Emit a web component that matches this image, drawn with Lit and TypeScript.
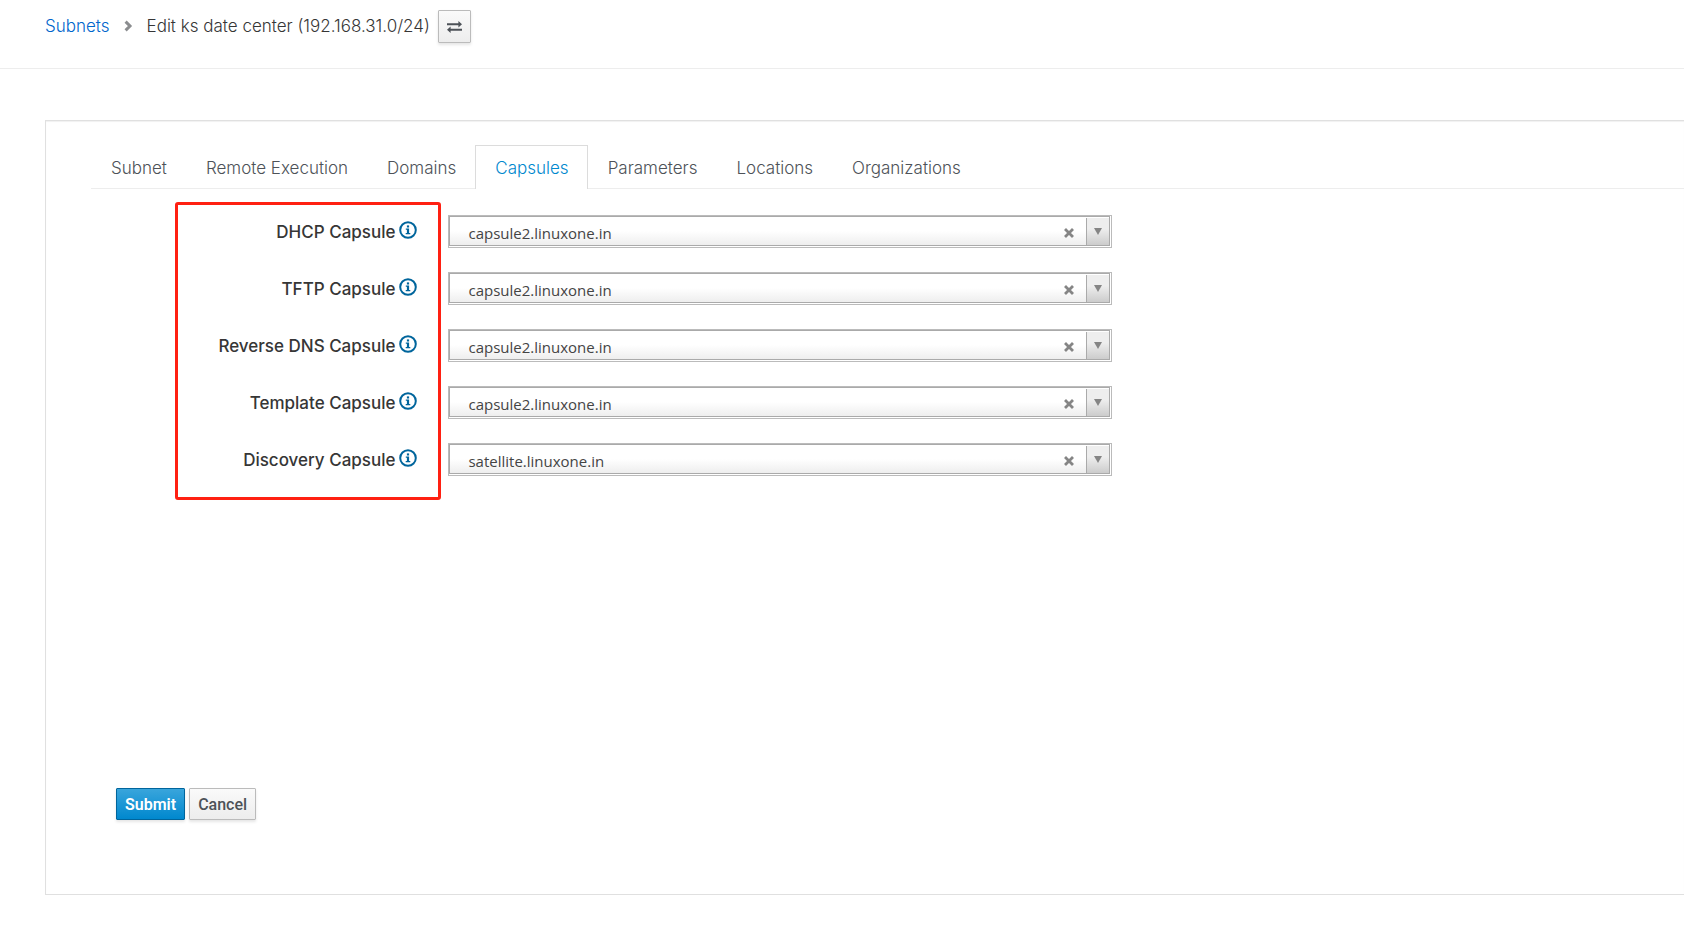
import { LitElement, html, css, svg } from "lit";
import { customElement, state } from "lit/decorators.js";
import { classMap } from "lit/directives/class-map.js";

interface CapsuleField {
  id: string;
  label: string;
  value: string;
}

const TABS = ["Subnet", "Remote Execution", "Domains", "Capsules", "Parameters", "Locations", "Organizations"];

const HOSTS = ["capsule2.linuxone.in", "satellite.linuxone.in"];

const chevronIcon = svg`<path d="M1.6 1.6 6 6 1.6 10.4" fill="none" stroke="#8b8d8f" stroke-width="3"/>`;

const switchIcon = svg`<g fill="#4d5258">
  <path d="M0 2.2h11.4V0L15 3.2l-3.6 3.2V4.2H0z"/>
  <path d="M15 7.8H3.6V5.6L0 8.8 3.6 12V9.8H15z"/>
</g>`;

const infoIcon = svg`<circle cx="9" cy="9" r="7.8" fill="none" stroke="#00659c" stroke-width="2"/>
  <rect x="7.9" y="4.4" width="2.2" height="2.1" fill="#00659c"/>
  <path d="M6.8 7.4h3.3v4.6h1.2v1.3H6.7V12h1.2V8.7H6.8z" fill="#00659c"/>`;

const clearIcon = svg`<path d="M2 2 8 8M8 2 2 8" stroke="#858585" stroke-width="2.8" stroke-linecap="square"/>`;

@customElement("capsule-select")
export class CapsuleSelect extends LitElement {
  static properties = { field: { attribute: false } };

  static styles = css`
    :host {
      display: contents;
    }
    .label {
      grid-column: 1;
      display: flex;
      justify-content: flex-end;
      align-items: center;
      gap: 4px;
      padding-right: 24px;
      color: #363636;
      font-size: 17px;
      font-weight: 500;
      line-height: 24px;
    }
    .info {
      display: flex;
      padding: 0 0 4px;
      border: 0;
      background: none;
      cursor: pointer;
    }
    .box {
      grid-column: 2;
      display: grid;
      grid-template-columns: 1fr 34px 24px;
      padding: 0 1px 1px 0;
      border: 1px solid #bbb;
      background: #fff;
    }
    .select {
      grid-area: 1 / 1 / 2 / 4;
      appearance: none;
      min-width: 0;
      height: 30px;
      margin: 0;
      padding: 4px 60px 0 18px;
      border: 1px solid #aaa;
      border-radius: 0;
      background: linear-gradient(to top, #eee 0%, #fff 50%);
      color: #444;
      font: 400 15px "Open Sans", sans-serif;
    }
    .clear {
      grid-area: 1 / 2;
      display: flex;
      align-items: center;
      justify-content: center;
      padding: 4px 0 0;
      border: 0;
      background: none;
      cursor: pointer;
    }
    .arrow {
      grid-area: 1 / 3;
      display: flex;
      align-items: center;
      justify-content: center;
      margin: 2px 1px 1px 0;
      border-left: 1px solid #aaa;
      background: linear-gradient(to top, #ccc 0%, #eee 60%);
      pointer-events: none;
    }
  `;

  declare field: CapsuleField;

  private clear() {
    const select = this.renderRoot.querySelector("select");
    if (select) select.value = "";
  }

  render() {
    const { id, label, value } = this.field;
    return html`
      <div class="label">
        <label for=${id}>${label}</label>
        <button class="info" type="button" aria-label="Help">
          <svg width="18" height="18" viewBox="0 0 18 18" aria-hidden="true">${infoIcon}</svg>
        </button>
      </div>
      <div class="box">
        <select class="select" id=${id}>
          ${HOSTS.map((h) => html`<option value=${h} ?selected=${h === value}>${h}</option>`)}
        </select>
        <button class="clear" type="button" aria-label="Clear" @click=${this.clear}>
          <svg width="10" height="10" viewBox="0 0 10 10" aria-hidden="true">${clearIcon}</svg>
        </button>
        <span class="arrow">
          <svg width="8" height="7" viewBox="0 0 8 7" aria-hidden="true"><path d="M0 0h8L4 7z" fill="#858585" /></svg>
        </span>
      </div>
    `;
  }
}

@customElement("app-root")
export class AppRoot extends LitElement {
  static styles = css`
    :host {
      display: block;
      overflow: hidden;
      background: #fff;
      color: #363636;
      font-family: Inter, "Liberation Sans", sans-serif;
    }
    .top {
      display: flex;
      align-items: center;
      padding: 10px 45px 25px;
      border-bottom: 1px solid #ededed;
      font-size: 17px;
      font-weight: 300;
      line-height: 24px;
    }
    .crumbs {
      display: flex;
      align-items: center;
      margin: 0;
      padding: 0 0 1px;
      list-style: none;
    }
    .crumb {
      display: flex;
      align-items: center;
    }
    .link {
      color: #06c;
      text-decoration: none;
    }
    .chevron {
      margin: 0 14px;
    }
    .btn {
      display: inline-flex;
      align-items: center;
      justify-content: center;
      height: 32px;
      padding: 0 8px;
      border: 1px solid #bbb;
      border-radius: 1px;
      background: linear-gradient(#fafafa, #ededed);
      box-shadow: 0 2px 3px rgba(3, 3, 3, 0.1);
      color: #4d5258;
      font: 500 16px Roboto, sans-serif;
      cursor: pointer;
    }
    .btn.primary {
      border-color: #00659c;
      background: linear-gradient(#39a5dc, #0088ce);
      color: #fff;
      font-weight: 600;
    }
    .btn.switch {
      height: 33px;
      margin-left: 8px;
    }
    .panel {
      margin: 51px 0 53px 45px;
      padding: 24px 0 74px 45px;
      border: 1px solid #e0e0e0;
      border-right: 0;
      box-shadow: 0 1px 1px rgba(3, 3, 3, 0.06) inset;
    }
    .tabs {
      display: flex;
      border-bottom: 1px solid #ededed;
    }
    .tab {
      margin-bottom: -1px;
      padding: 10px 18px 9px 19px;
      border: 1px solid transparent;
      border-bottom: 0;
      background: none;
      color: #4d5258;
      font: 300 17px Inter, "Liberation Sans", sans-serif;
      line-height: 24px;
      cursor: pointer;
    }
    .tab.active {
      border-color: #dcdcdc;
      background: #fff;
      color: #0088ce;
    }
    .fields {
      position: relative;
      display: grid;
      grid-template-columns: 22% 27fr 23fr;
      column-gap: 7px;
      row-gap: 24px;
      padding-top: 26px;
    }
    .highlight {
      position: absolute;
      grid-area: 1 / 1 / 6 / 2;
      inset: -13px 0 -24px 84px;
      border: 3px solid #ff2012;
      border-radius: 3px;
      pointer-events: none;
    }
    .actions {
      display: flex;
      gap: 4px;
      margin-top: 312px;
      padding-left: 25px;
    }
  `;

  @state() private activeTab = "Capsules";

  private fields: CapsuleField[] = [
    { id: "dhcp", label: "DHCP Capsule", value: HOSTS[0] },
    { id: "tftp", label: "TFTP Capsule", value: HOSTS[0] },
    { id: "dns", label: "Reverse DNS Capsule", value: HOSTS[0] },
    { id: "template", label: "Template Capsule", value: HOSTS[0] },
    { id: "discovery", label: "Discovery Capsule", value: HOSTS[1] },
  ];

  render() {
    return html`
      <header class="top">
        <ol class="crumbs">
          <li class="crumb">
            <a class="link" href="#subnets">Subnets</a>
            <svg class="chevron" width="9" height="12" viewBox="0 0 9 12" aria-hidden="true">${chevronIcon}</svg>
          </li>
          <li class="crumb">Edit ks date center (192.168.31.0/24)</li>
        </ol>
        <button class="btn switch" type="button" aria-label="Switch subnet">
          <svg width="15" height="12" viewBox="0 0 15 12" aria-hidden="true">${switchIcon}</svg>
        </button>
      </header>
      <main class="panel">
        <nav class="tabs" role="tablist">
          ${TABS.map(
            (t) => html`<button
              type="button"
              role="tab"
              aria-selected=${t === this.activeTab}
              class=${classMap({ tab: true, active: t === this.activeTab })}
              @click=${() => (this.activeTab = t)}
            >${t}</button>`
          )}
        </nav>
        <form @submit=${(e: Event) => e.preventDefault()}>
          <div class="fields">
            ${this.fields.map((f) => html`<capsule-select .field=${f}></capsule-select>`)}
            <div class="highlight"></div>
          </div>
          <div class="actions">
            <button class="btn primary" type="submit">Submit</button>
            <button class="btn" type="button">Cancel</button>
          </div>
        </form>
      </main>
    `;
  }
}
